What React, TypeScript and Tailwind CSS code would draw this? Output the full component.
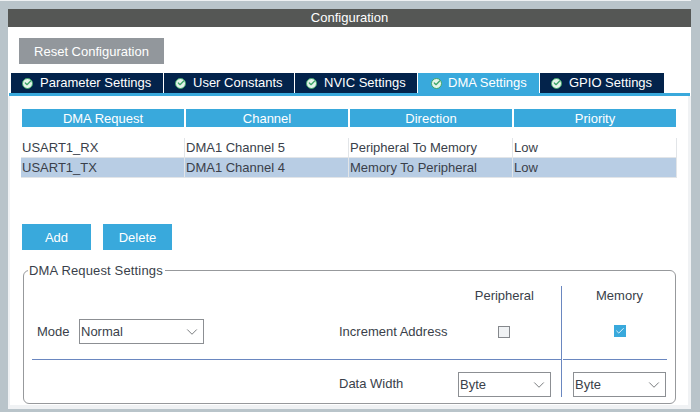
import { ChevronDown, Check } from 'lucide-react';

const tabs = [
  { label: 'Parameter Settings', w: 'w-[152px] pl-[11px] gap-[7px]' },
  { label: 'User Constants', w: 'w-[130px] pl-[11px] gap-[7px]' },
  { label: 'NVIC Settings', w: 'w-[122px] pl-[11px] gap-[7px]' },
  { label: 'DMA Settings', w: 'w-[121px] pl-[13px] gap-[6px]', active: true },
  { label: 'GPIO Settings', w: 'w-[124px] pl-[11px] gap-[7px]' },
];

const columns = ['DMA Request', 'Channel', 'Direction', 'Priority'];

const rows = [
  ['USART1_RX', 'DMA1 Channel 5', 'Peripheral To Memory', 'Low'],
  ['USART1_TX', 'DMA1 Channel 4', 'Memory To Peripheral', 'Low'],
];

function TabCheck() {
  return (
    <span className="flex h-[11px] w-[11px] items-center justify-center rounded-full border border-[#3fa66a] bg-[#e6f4ea]">
      <Check size={8} strokeWidth={4} className="text-[#3fa66a]" />
    </span>
  );
}

function Select({ value, w }: { value: string; w: string }) {
  return (
    <div className={`flex h-[25px] items-center justify-between border border-[#8c8f93] pl-[1px] pr-[2px] ${w}`}>
      <span>{value}</span>
      <ChevronDown size={18} strokeWidth={1.2} className="text-[#6b6e72]" />
    </div>
  );
}

export default function App() {
  return (
    <div className="flex h-[412px] w-[700px] flex-col overflow-hidden bg-[#b9c4ca] text-[13px] text-[#3a3f4a] [font-family:'Liberation_Sans',sans-serif]">
      <div className="h-[1px] w-[691px] bg-[#eef1f3]" />
      <div className="ml-[8px] mr-[9px] mt-[8px] mb-[3px] flex flex-1 flex-col bg-white">
        <div className="flex h-[18px] items-center justify-center bg-[#555755] text-white">Configuration</div>

        <button className="ml-[11px] mt-[11px] h-[26px] w-[145px] bg-[#92979c] pt-[1px] text-white">Reset Configuration</button>

        <div className="ml-[3px] mt-[9px] flex h-[20px] gap-[1px]">
          {tabs.map((t) => (
            <div key={t.label} className={`flex items-center text-white ${t.w} ${t.active ? 'bg-[#39a9dc]' : 'bg-[#03234b]'}`}>
              <TabCheck />
              <span>{t.label}</span>
            </div>
          ))}
        </div>
        <div className="mx-[1px] h-[3px] bg-[#39a9dc]" />

        {/* light edge round everything under the tabs */}
        <div className="flex flex-1 flex-col border-b-[4px] border-l-[2px] border-r-[3px] border-[#f0f2f4]">
          <div className="ml-[12px] mt-[13px] flex h-[18px] gap-[2px]">
            {columns.map((c) => (
              <div key={c} className="flex w-[162px] items-center justify-center bg-[#39a9dc] pt-[1px] text-white">{c}</div>
            ))}
          </div>

          <div className="ml-[11px] mt-[11px] w-[656px]">
            {rows.map((r, i) => (
              <div key={r[0]} className={`flex h-[20px] border-b border-[#e2e5e8] ${i === 1 ? 'bg-[#b8cde4]' : ''}`}>
                {r.map((cell, j) => (
                  <div key={j} className="flex w-[164px] items-center border-r border-[#e2e5e8] pl-[1px]">{cell}</div>
                ))}
              </div>
            ))}
          </div>

          <div className="ml-[12px] mt-[46px] flex gap-[12px]">
            <button className="h-[26px] w-[69px] bg-[#39a9dc] pt-[1px] text-white">Add</button>
            <button className="h-[26px] w-[69px] bg-[#39a9dc] pt-[1px] text-white">Delete</button>
          </div>

          <fieldset className="ml-[13px] mt-[13px] h-[141px] w-[653px] rounded-[6px] border border-[#97999c] px-[8px]">
            <legend className="ml-[-4px] pl-[1px] pr-[2px] leading-[15px] tracking-[0.15px]">DMA Request Settings</legend>
            <div className="mt-[8px] flex h-[74px]">
              <div className="flex w-[530px] flex-col border-b border-r border-[#6a87c0]">
                <div className="flex h-[20px] items-center justify-end pr-[27px]">Peripheral</div>
                <div className="mt-[13px] flex items-center">
                  <span className="ml-[5px] w-[42px]">Mode</span>
                  <Select value="Normal" w="w-[125px]" />
                  <span className="ml-[135px] w-[109px] whitespace-nowrap">Increment Address</span>
                  <span className="ml-[50px] h-[12px] w-[12px] border border-[#85888c] bg-[#f0f2f4]" />
                </div>
              </div>
              <div className="ml-[1px] flex flex-1 flex-col items-center border-b border-[#6a87c0] pl-[9px]">
                <div className="flex h-[20px] items-center">Memory</div>
                <span className="mt-[19px] flex h-[12px] w-[12px] items-center justify-center bg-[#39a9dc]">
                  <Check size={10} strokeWidth={2} className="text-white" />
                </span>
              </div>
            </div>
            <div className="flex h-[37px]">
              <div className="flex w-[530px] items-end border-r border-[#6a87c0] pl-[307px] pr-[10px]">
                <span className="flex h-[25px] items-center pb-[1px]">Data Width</span>
                <div className="ml-auto"><Select value="Byte" w="w-[93px]" /></div>
              </div>
              <div className="ml-[11px] flex items-end"><Select value="Byte" w="w-[93px]" /></div>
            </div>
          </fieldset>
        </div>
      </div>
    </div>
  );
}
